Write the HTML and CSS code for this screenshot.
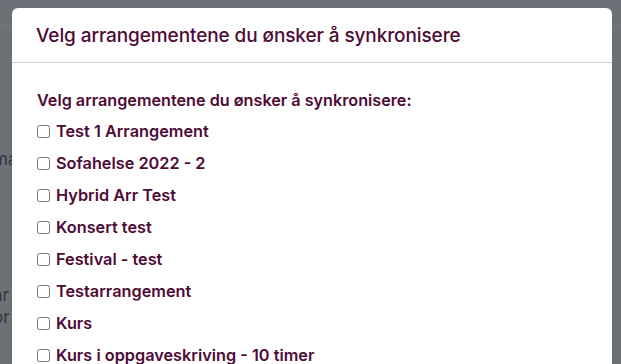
FILE: index.html
```html
<!DOCTYPE html>
<html lang="no">
<head>
<meta charset="utf-8">
<link rel="stylesheet" href="styles.css">
</head>
<body>
<div class="page">
  <div class="page-bar"></div>
  <div class="page-text t1">ma</div>
  <div class="page-text t2">ar</div>
  <div class="page-text t3">or</div>
</div>
<div class="backdrop"></div>
<div class="modal">
  <div class="modal-header">
    <h5 class="modal-title">Velg arrangementene du ønsker å synkronisere</h5>
  </div>
  <div class="modal-body">
    <p class="intro">Velg arrangementene du ønsker å synkronisere:</p>
    <ul class="list">
      <li><label><span class="box"></span>Test 1 Arrangement</label></li>
      <li><label><span class="box"></span>Sofahelse 2022 - 2</label></li>
      <li><label><span class="box"></span>Hybrid Arr Test</label></li>
      <li><label><span class="box"></span>Konsert test</label></li>
      <li><label><span class="box"></span>Festival - test</label></li>
      <li><label><span class="box"></span>Testarrangement</label></li>
      <li><label><span class="box"></span>Kurs</label></li>
      <li><label><span class="box"></span>Kurs i oppgaveskriving - 10 timer</label></li>
    </ul>
  </div>
</div>
</body>
</html>
```
FILE: styles.css
```css
html, body {
  margin: 0;
  padding: 0;
  width: 621px;
  height: 364px;
  overflow: hidden;
  font-family: Inter, "Noto Sans", sans-serif;
  background: #d8e2ee;
}
.page {
  position: absolute;
  inset: 0;
  background: #d8e2ee;
}
.page-bar {
  height: 24px;
  border-bottom: 1px solid #e6ecf4;
}
.page-text {
  position: absolute;
  left: -7px;
  font-size: 17px;
  color: #6a6e74;
  font-family: Inter, sans-serif;
}
.t1 { top: 149px; }
.t2 { top: 285px; }
.t3 { top: 307px; }
.backdrop {
  position: absolute;
  inset: 0;
  background: rgba(0, 0, 0, 0.5);
}
.modal {
  position: absolute;
  left: 12px;
  top: 8px;
  width: 600px;
  height: 400px;
  background: #ffffff;
  border-radius: 6px;
  color: #4d0b36;
}
.modal-header {
  height: 54px;
  border-bottom: 1px solid #dccdd6;
  display: flex;
  align-items: center;
  padding: 0 24px;
}
.modal-title {
  margin: 0;
  font-size: 19px;
  font-weight: 500;
  letter-spacing: -0.1px;
}
.modal-body {
  padding: 25px 25px 0;
}
.intro {
  margin: 0 0 3px;
  font-size: 16.2px;
  font-weight: 600;
  line-height: 24px;
}
.list {
  list-style: none;
  margin: 0;
  padding: 0;
}
.list li {
  height: 32px;
  display: flex;
  align-items: center;
  font-size: 16.3px;
  font-weight: 600;
}
.list label {
  display: flex;
  align-items: center;
}
.box {
  width: 11px;
  height: 11px;
  border: 1px solid #767676;
  border-radius: 2.5px;
  margin-right: 6px;
  background: #fff;
}
```
